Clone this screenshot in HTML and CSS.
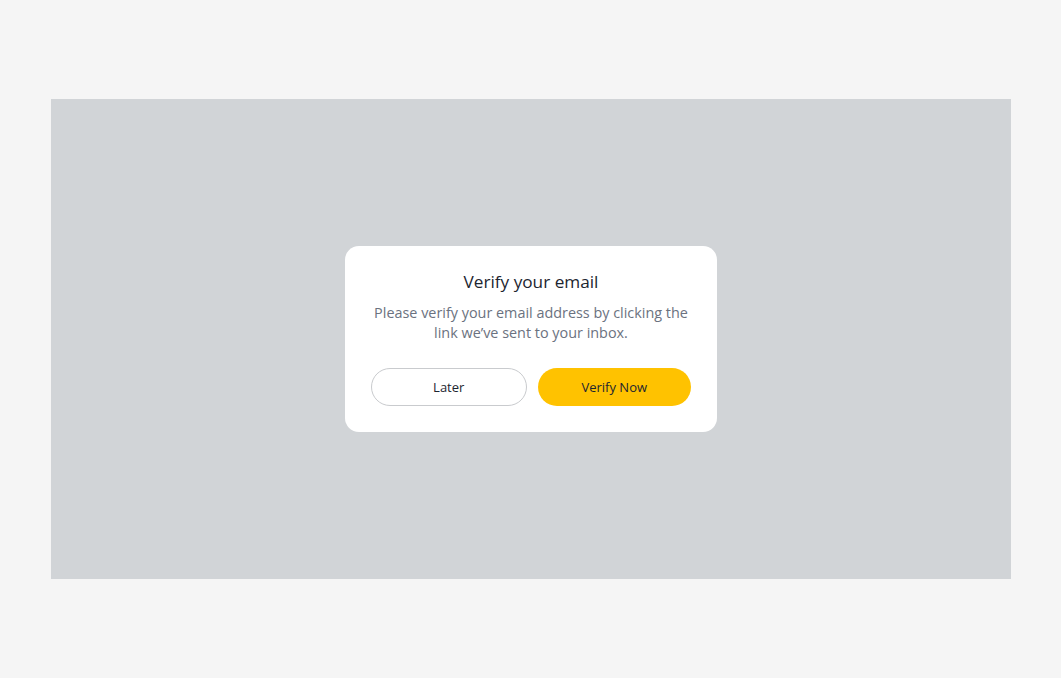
FILE: index.html
```html
<!DOCTYPE html>
<html lang="en">
<head>
<meta charset="utf-8">
<title>Verify your email</title>
<link rel="stylesheet" href="styles.css">
</head>
<body>
<div class="stage">
  <div class="modal" role="dialog" aria-labelledby="t">
    <h2 class="title" id="t">Verify your email</h2>
    <p class="text">Please verify your email address by clicking the link we’ve sent to your inbox.</p>
    <div class="actions">
      <button class="btn btn-secondary">Later</button>
      <button class="btn btn-primary">Verify Now</button>
    </div>
  </div>
</div>
</body>
</html>
```
FILE: styles.css
```css
html, body {
  margin: 0;
  padding: 0;
}
body {
  background: #f5f5f5;
  font-family: "Open Sans", "Liberation Sans", sans-serif;
  padding: 99px 0 0 51px;
  height: 678px;
  box-sizing: border-box;
}
.stage {
  width: 960px;
  height: 480px;
  background: #d1d4d7;
  display: flex;
  align-items: center;
  justify-content: center;
}
.modal {
  width: 372px;
  box-sizing: border-box;
  background: #ffffff;
  border-radius: 14px;
  padding: 24px 26px 26px;
  text-align: center;
}
.title {
  margin: 0;
  font-size: 17.2px;
  line-height: 24px;
  font-weight: 500;
  color: #1c2530;
}
.text {
  margin: 9px 0 0;
  font-size: 14.4px;
  line-height: 20px;
  color: #6b7280;
}
.actions {
  margin-top: 25px;
  display: flex;
  gap: 11px;
}
.btn {
  flex: 1;
  height: 38px;
  border-radius: 19px;
  font-family: inherit;
  font-size: 13px;
  font-weight: 500;
  color: #1c2530;
  cursor: pointer;
}
.btn-secondary {
  background: #ffffff;
  border: 1px solid #c9cbce;
}
.btn-primary {
  background: #ffc200;
  border: none;
}
```
